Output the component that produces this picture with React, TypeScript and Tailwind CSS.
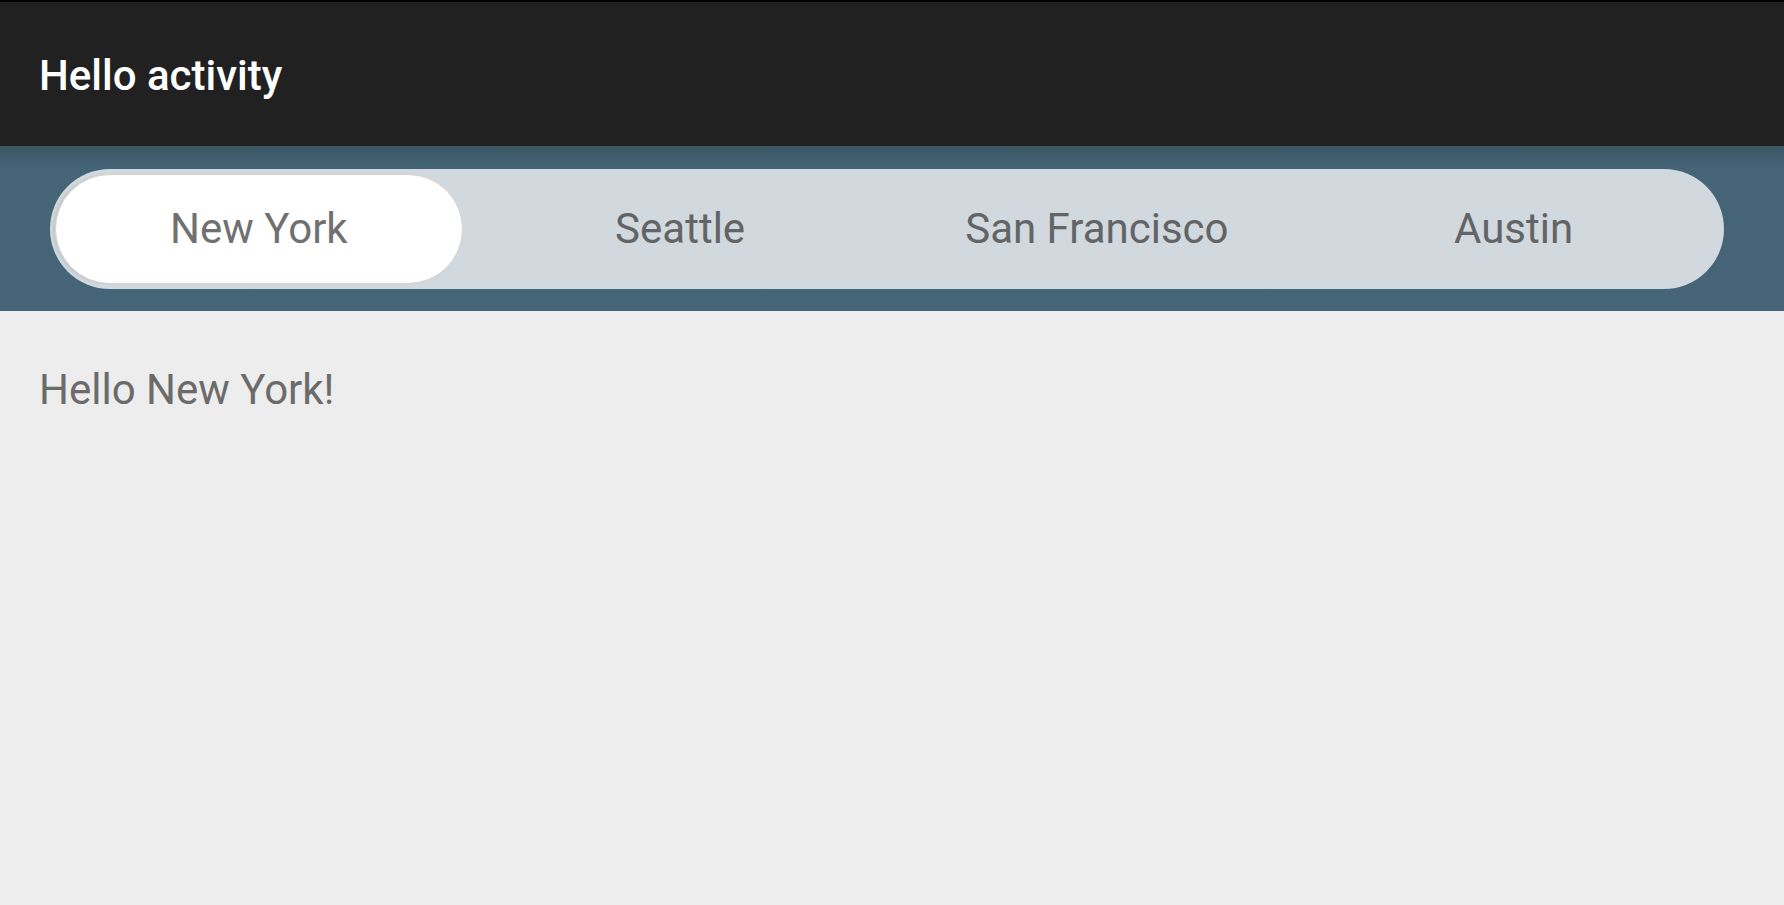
import React from "react";

const tabs = ["New York", "Seattle", "San Francisco", "Austin"];

export default function App() {
  const selected = 0;
  return (
    <div
      className="w-[1784px] h-[905px] flex flex-col bg-[#ededed] overflow-hidden"
      style={{ fontFamily: "Roboto, 'Noto Sans', sans-serif" }}
    >
      <div className="h-[146px] shrink-0 bg-[#212121] border-t-2 border-black flex items-center pl-[39px]">
        <span className="text-white text-[42px] font-medium leading-none mt-[4px]">Hello activity</span>
      </div>
      <div className="h-[165px] shrink-0 bg-gradient-to-b from-[#3a5664] via-[#456577] via-[14%] to-[#466477] flex items-center pl-[50px] pr-[60px]">
        <div className="w-full h-[120px] rounded-full bg-[#d1d8de] grid grid-cols-4 items-center pl-[5px] pr-[2px] py-[5px]">
          {tabs.map((t, i) => (
            <div
              key={t}
              className={
                i === selected
                  ? "h-[110px] rounded-full bg-white border border-[#d8d4cc] shadow-[-3px_0_2px_rgba(0,0,0,0.06)] flex items-center justify-center text-[42px] text-[#707070] mr-[9px]"
                  : "h-[110px] flex items-center justify-center text-[42px] text-[#626466]"
              }
            >
              {t}
            </div>
          ))}
        </div>
      </div>
      <div className="pl-[39px] pt-[58px]">
        <span className="text-[42px] text-[#6b6b6b] leading-none">Hello New York!</span>
      </div>
    </div>
  );
}
